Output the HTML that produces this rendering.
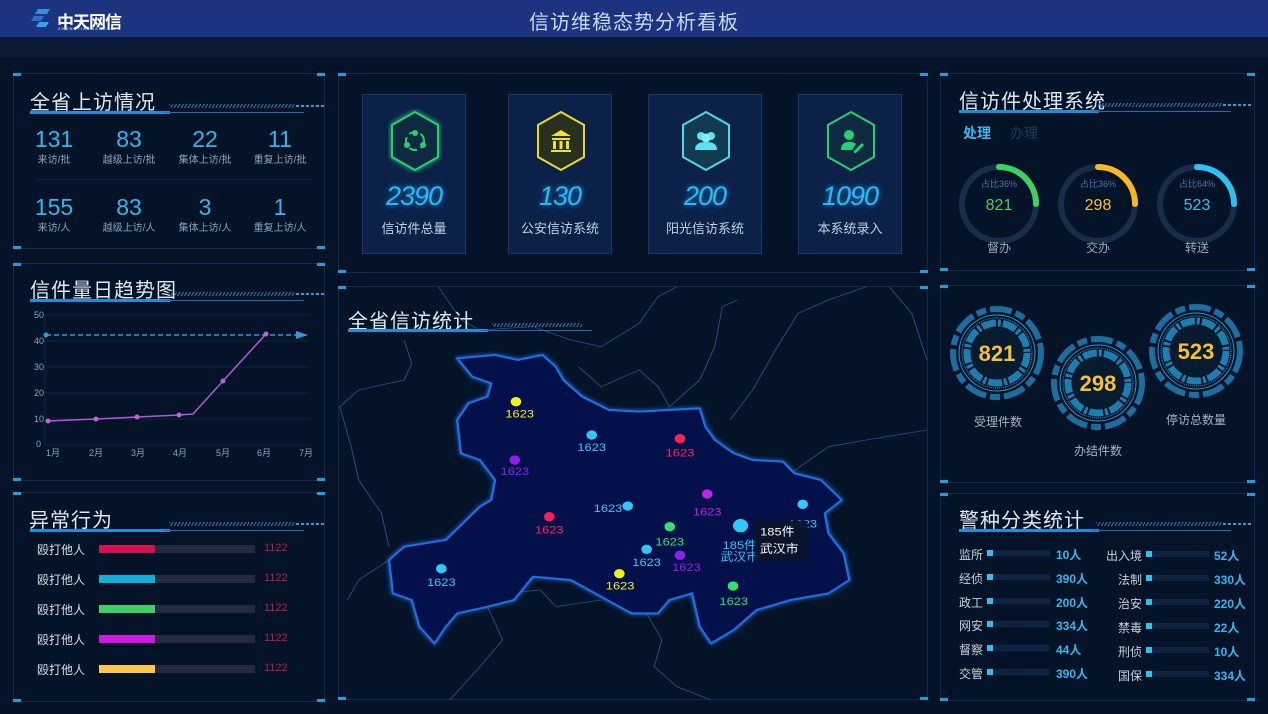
<!DOCTYPE html>
<html><head><meta charset="utf-8">
<style>
*{margin:0;padding:0;box-sizing:border-box}
body{width:1268px;height:714px;background:#041327;font-family:"Liberation Sans","Noto Sans CJK SC",sans-serif;position:relative;overflow:hidden;color:#c9d6e6}
.abs{position:absolute}
.hdr{left:0;top:0;width:1268px;height:37px;background:#1c3480}
.sub{left:0;top:37px;width:1268px;height:20px;background:#0c1a38}
.panel{position:absolute;border:1px solid #0e2a48}
.c{position:absolute;width:8px;height:3px;background:#1aa0e0}
.title{position:absolute;left:16px;top:12px;font-size:20px;color:#dfe8f3;letter-spacing:1px}
.tl{position:absolute;left:16px;top:37px;width:140px;height:3px;background:#1a8fe0}
.tl2{position:absolute;left:150px;top:38px;width:140px;height:1px;background:#1a6fb0}
.hatch{position:absolute;left:155px;top:30px;width:126px;height:4px;background:repeating-linear-gradient(120deg,#2a78b8 0 1px,transparent 1px 3px)}
.dash{position:absolute;left:282px;top:31px;width:30px;height:2px;background:repeating-linear-gradient(90deg,#2a9be0 0 3px,transparent 3px 5px)}
.num{position:absolute;width:80px;text-align:center;font-size:23px;color:#2fb8ee}
.lab{position:absolute;width:80px;text-align:center;font-size:10px;color:#8ea3b8}
.card{position:absolute;top:94px;height:160px;background:#0b2148;border:1px solid #123a6a}
.dig{position:absolute;width:100%;text-align:center;top:86px;font-size:27px;font-style:italic;color:#2fb8ee;letter-spacing:-1px;text-shadow:0 0 6px #1a8fe0}
.cl{position:absolute;width:100%;text-align:center;top:123px;font-size:13px;color:#c3d0de}
.bl{position:absolute;left:37px;font-size:12px;color:#d6dde8}
.bt{position:absolute;left:99px;width:156px;height:8px;background:#252a40}
.bv{position:absolute;left:264px;font-size:11px;color:#c0184e}
.pl{position:absolute;font-size:12px;color:#c7d1de}
.pv{position:absolute;font-size:12px;color:#35b6ee;font-weight:bold}
.sq{position:absolute;width:6px;height:6px;background:#2ec0f0}
.tr{position:absolute;height:6px;background:#0f2440}
</style></head><body>
<div class="abs hdr"></div>
<div class="abs sub"></div>
<svg class="abs" style="left:30px;top:6px" width="24" height="24" viewBox="0 0 24 24"><path d="M8 3h12l-3 5H5z" fill="#3a8ee0"/><path d="M4 10h10l-3 5H1z" fill="#2a6fc8"/><path d="M9 16h10l-3 5H6z" fill="#3a9ef0"/></svg>
<div class="abs" style="left:57px;top:8px;font-size:17px;color:#fff;font-weight:bold;letter-spacing:-1px">中天网信</div>
<div class="abs" style="left:58px;top:26px;font-size:4px;color:#cfe;letter-spacing:1px">ZHONGTIANWANGXIN</div>
<div class="abs" style="left:0;width:1268px;top:6px;text-align:center;font-size:20px;color:#c9d8f2;letter-spacing:1px">信访维稳态势分析看板</div>

<!-- left panel 1 -->
<div class="panel" style="left:13px;top:73px;width:312px;height:176px">
<div class="c" style="left:-1px;top:-1px"></div><div class="c" style="right:-1px;top:-1px"></div><div class="c" style="left:-1px;bottom:-1px"></div><div class="c" style="right:-1px;bottom:-1px"></div>
<div class="title">全省上访情况</div><div class="tl"></div><div class="tl2"></div><div class="hatch"></div><div class="dash"></div>
<div class="num" style="left:0;top:52px">131</div><div class="lab" style="left:0;top:77px">来访/批</div>
<div class="num" style="left:75px;top:52px">83</div><div class="lab" style="left:75px;top:77px">越级上访/批</div>
<div class="num" style="left:151px;top:52px">22</div><div class="lab" style="left:151px;top:77px">集体上访/批</div>
<div class="num" style="left:226px;top:52px">11</div><div class="lab" style="left:226px;top:77px">重复上访/批</div>
<div class="abs" style="left:23px;top:105px;width:275px;height:1px;background:#0f2540"></div>
<div class="num" style="left:0;top:120px">155</div><div class="lab" style="left:0;top:145px">来访/人</div>
<div class="num" style="left:75px;top:120px">83</div><div class="lab" style="left:75px;top:145px">越级上访/人</div>
<div class="num" style="left:151px;top:120px">3</div><div class="lab" style="left:151px;top:145px">集体上访/人</div>
<div class="num" style="left:226px;top:120px">1</div><div class="lab" style="left:226px;top:145px">重复上访/人</div>
</div>

<!-- left panel 2 chart -->
<div class="panel" style="left:13px;top:263px;width:312px;height:218px">
<div class="c" style="left:-1px;top:-1px"></div><div class="c" style="right:-1px;top:-1px"></div><div class="c" style="left:-1px;bottom:-1px"></div><div class="c" style="right:-1px;bottom:-1px"></div>
<div class="title" style="top:10px">信件量日趋势图</div><div class="tl" style="top:35px"></div><div class="tl2" style="top:36px"></div><div class="hatch" style="top:28px"></div><div class="dash" style="top:29px"></div>
</div>
<svg class="abs" style="left:0;top:300px" width="330" height="170">
<g stroke="#0f2442" stroke-width="1">
<line x1="45" y1="15" x2="310" y2="15"/><line x1="45" y1="41" x2="310" y2="41"/><line x1="45" y1="67" x2="310" y2="67"/><line x1="45" y1="93" x2="310" y2="93"/><line x1="45" y1="119" x2="310" y2="119"/><line x1="45" y1="145" x2="310" y2="145"/><line x1="45" y1="15" x2="45" y2="145"/></g>
<g font-size="9" fill="#8ea3b8" font-family="Liberation Sans,Noto Sans CJK SC,sans-serif">
<text x="34" y="18">50</text><text x="34" y="44">40</text><text x="34" y="70">30</text><text x="34" y="96">20</text><text x="34" y="122">10</text><text x="36" y="147">0</text>
<text x="46" y="156">1月</text><text x="89" y="156">2月</text><text x="131" y="156">3月</text><text x="173" y="156">4月</text><text x="216" y="156">5月</text><text x="257" y="156">6月</text><text x="299" y="156">7月</text></g>
<line x1="46" y1="35" x2="298" y2="35" stroke="#2a9be0" stroke-width="1.5" stroke-dasharray="5 3"/>
<circle cx="46" cy="35" r="2.5" fill="#2a9be0"/><path d="M296 31l12 4-12 4z" fill="#2a9be0"/>
<polyline points="48,121 96,119 137,117 179,115 193,114 223,81 266,34" fill="none" stroke="#b05ad8" stroke-width="1.5"/>
<g fill="#c060e0"><circle cx="48" cy="121" r="2.5"/><circle cx="96" cy="119" r="2.5"/><circle cx="137" cy="117" r="2.5"/><circle cx="179" cy="115" r="2.5"/><circle cx="223" cy="81" r="2.5"/><circle cx="266" cy="34" r="2.5"/></g>
</svg>

<!-- left panel 3 bars -->
<div class="panel" style="left:13px;top:492px;width:312px;height:210px">
<div class="c" style="left:-1px;top:-1px"></div><div class="c" style="right:-1px;top:-1px"></div><div class="c" style="left:-1px;bottom:-1px"></div><div class="c" style="right:-1px;bottom:-1px"></div>
<div class="title" style="left:15px;top:11px">异常行为</div><div class="tl" style="top:36px"></div><div class="tl2" style="top:37px"></div><div class="hatch" style="top:29px"></div><div class="dash" style="top:30px"></div>
</div>
<div class="bl" style="top:541px">殴打他人</div><div class="bt" style="top:545px"><div style="width:56px;height:8px;background:#d8104e"></div></div><div class="bv" style="top:542px">1122</div>
<div class="bl" style="top:571px">殴打他人</div><div class="bt" style="top:575px"><div style="width:56px;height:8px;background:#0cb0d8"></div></div><div class="bv" style="top:572px">1122</div>
<div class="bl" style="top:601px">殴打他人</div><div class="bt" style="top:605px"><div style="width:56px;height:8px;background:#3ed068"></div></div><div class="bv" style="top:602px">1122</div>
<div class="bl" style="top:631px">殴打他人</div><div class="bt" style="top:635px"><div style="width:56px;height:8px;background:#d018e0"></div></div><div class="bv" style="top:632px">1122</div>
<div class="bl" style="top:661px">殴打他人</div><div class="bt" style="top:665px"><div style="width:56px;height:8px;background:#ffc848"></div></div><div class="bv" style="top:662px">1122</div>

<!-- middle top -->
<div class="panel" style="left:338px;top:73px;width:590px;height:200px">
<div class="c" style="left:-1px;top:-1px"></div><div class="c" style="right:-1px;top:-1px"></div><div class="c" style="left:-1px;bottom:-1px"></div><div class="c" style="right:-1px;bottom:-1px"></div>
</div>
<div class="card" style="left:362px;width:104px">
<svg class="abs" style="left:25px;top:14px" width="54" height="64" viewBox="0 0 54 64"><path d="M27 3L50 16V48L27 61L4 48V16Z" fill="#0d2a40" stroke="#25d070" stroke-width="2" style="filter:drop-shadow(0 0 3px #25d070)"/><circle cx="27" cy="24" r="3" fill="#25d070"/><circle cx="19" cy="36" r="3" fill="#25d070"/><circle cx="35" cy="36" r="3" fill="#25d070"/><circle cx="27" cy="32" r="9" fill="none" stroke="#25d070" stroke-width="2" stroke-dasharray="8 4"/></svg>
<div class="dig">2390</div><div class="cl">信访件总量</div></div>
<div class="card" style="left:508px;width:104px">
<svg class="abs" style="left:25px;top:14px" width="54" height="64" viewBox="0 0 54 64"><path d="M27 3L50 16V48L27 61L4 48V16Z" fill="#2a3020" stroke="#e8d830" stroke-width="2"/><path d="M17 27L27 21L37 27Z M18 29h18v2H18z M19 32h3v8h-3z M25.5 32h3v8h-3z M32 32h3v8h-3z M17 41h20v2H17z" fill="#f0e030"/></svg>
<div class="dig">130</div><div class="cl">公安信访系统</div></div>
<div class="card" style="left:648px;width:114px">
<svg class="abs" style="left:30px;top:14px" width="54" height="64" viewBox="0 0 54 64"><path d="M27 3L50 16V48L27 61L4 48V16Z" fill="#123a50" stroke="#50d8e8" stroke-width="2"/><circle cx="22" cy="27" r="4" fill="#60e0f0"/><circle cx="32" cy="27" r="4" fill="#60e0f0"/><circle cx="27" cy="29" r="4.5" fill="#80f0ff"/><path d="M16 41c0-6 4-8 11-8s11 2 11 8z" fill="#60e0f0"/></svg>
<div class="dig">200</div><div class="cl">阳光信访系统</div></div>
<div class="card" style="left:798px;width:104px">
<svg class="abs" style="left:25px;top:14px" width="54" height="64" viewBox="0 0 54 64"><path d="M27 3L50 16V48L27 61L4 48V16Z" fill="#0d2a40" stroke="#25d070" stroke-width="2"/><circle cx="25" cy="26" r="5" fill="#25d070"/><path d="M17 41c0-6 3-8 8-8s6 1 7 2l-4 6z" fill="#25d070"/><path d="M30 42l8-8 2 2-8 8h-2z" fill="#25d070"/></svg>
<div class="dig">1090</div><div class="cl">本系统录入</div></div>

<!-- map -->
<div class="panel" style="left:338px;top:286px;width:590px;height:414px">
<div class="c" style="left:-1px;top:-1px"></div><div class="c" style="right:-1px;top:-1px"></div><div class="c" style="left:-1px;bottom:-1px"></div><div class="c" style="right:-1px;bottom:-1px"></div>
</div>
<svg class="abs" style="left:336px;top:280px" width="594" height="434" viewBox="0 0 1568 1302" preserveAspectRatio="none">
<g fill="none" stroke="#2a4e80" stroke-width="2.5">
<path d="M270 20 L330 120 L380 150 L520 140 L620 180 L700 200 L800 130 L850 50 L900 20"/>
<path d="M180 180 L200 250 L180 300 L60 330 L10 380 L40 500 L60 600 L120 700 L140 800"/>
<path d="M640 260 L700 320 L800 270 L850 320 L880 380"/>
<path d="M880 380 L960 300 L1000 200 L1020 80 L1060 60"/>
<path d="M1040 420 L1100 330 L1160 210 L1220 100 L1300 60 L1400 20"/>
<path d="M1200 580 L1300 500 L1400 480 L1560 450"/>
<path d="M1460 20 L1520 100 L1560 240"/>
<path d="M400 980 L440 1080 L380 1160 L300 1260"/>
<path d="M820 1000 L860 1080 L840 1160 L900 1220 L990 1260"/>
<path d="M450 940 L540 930 L580 980 L700 960"/>
<path d="M140 840 L60 900 L30 960"/>
</g>
<path d="M320 235 L420 225 L480 240 L545 225 L580 260 L600 300 L650 350 L720 390 L800 395 L880 390 L960 385 L975 440 L1000 480 L1050 520 L1100 540 L1180 545 L1210 580 L1280 600 L1335 660 L1290 700 L1300 760 L1340 820 L1355 900 L1300 940 L1200 960 L1110 990 L1050 1050 L990 1090 L960 1040 L940 940 L880 960 L850 1000 L780 1000 L700 950 L620 900 L520 890 L470 960 L400 980 L320 1000 L290 1040 L260 1090 L220 1040 L200 960 L150 940 L140 840 L180 800 L290 780 L380 680 L410 660 L420 600 L380 540 L330 520 L320 420 L350 370 L400 350 L410 310 L360 290 Z" fill="#03104a" stroke="#1f6fe0" stroke-width="6" style="filter:drop-shadow(0 0 6px #1f6fe0)"/>
<g font-size="34" font-family="Liberation Sans,sans-serif" text-anchor="middle">
<circle cx="475" cy="365" r="14" fill="#f0f020"/><text x="485" y="412" fill="#f0f020">1623</text>
<circle cx="675" cy="465" r="14" fill="#30c8f8"/><text x="675" y="513" fill="#30c8f8">1623</text>
<circle cx="908" cy="476" r="14" fill="#ff1f58"/><text x="908" y="529" fill="#ff1f58">1623</text>
<circle cx="472" cy="540" r="14" fill="#9020f0"/><text x="472" y="585" fill="#9020f0">1623</text>
<circle cx="980" cy="642" r="14" fill="#c020f0"/><text x="980" y="707" fill="#c020f0">1623</text>
<circle cx="770" cy="678" r="14" fill="#30c8f8"/><text x="718" y="696" fill="#30c8f8">1623</text>
<circle cx="563" cy="710" r="14" fill="#ff1f58"/><text x="563" y="760" fill="#ff1f58">1623</text>
<circle cx="881" cy="740" r="14" fill="#30e070"/><text x="881" y="796" fill="#30e070">1623</text>
<circle cx="820" cy="808" r="14" fill="#30c8f8"/><text x="820" y="858" fill="#30c8f8">1623</text>
<circle cx="908" cy="826" r="14" fill="#9020f0"/><text x="925" y="873" fill="#9020f0">1623</text>
<circle cx="278" cy="866" r="14" fill="#30c8f8"/><text x="278" y="918" fill="#30c8f8">1623</text>
<circle cx="748" cy="881" r="14" fill="#f0f020"/><text x="750" y="929" fill="#f0f020">1623</text>
<circle cx="1048" cy="918" r="14" fill="#30e070"/><text x="1050" y="975" fill="#30e070">1623</text>
<circle cx="1232" cy="673" r="14" fill="#30c8f8"/><text x="1232" y="743" fill="#30c8f8">1623</text>
<circle cx="1068" cy="737" r="20" fill="#30c8f8"/><text x="1066" y="807" fill="#30c8f8">185件</text><text x="1066" y="842" fill="#30c8f8">武汉市</text>
<rect x="1105" y="722" width="140" height="120" fill="#0a1428" opacity="0.9"/>
<text x="1165" y="767" fill="#fff">185件</text><text x="1170" y="817" fill="#fff">武汉市</text>
</g>
</svg>
<div class="abs" style="left:348px;top:305px;font-size:20px;color:#dfe8f3;letter-spacing:1px">全省信访统计</div>
<div class="abs" style="left:348px;top:329px;width:140px;height:3px;background:#1a8fe0"></div>
<div class="abs" style="left:482px;top:330px;width:110px;height:1px;background:#1a6fb0"></div>
<div class="abs" style="left:492px;top:323px;width:90px;height:4px;background:repeating-linear-gradient(120deg,#2a78b8 0 1px,transparent 1px 3px)"></div>

<!-- right panel 1 -->
<div class="panel" style="left:940px;top:73px;width:315px;height:198px">
<div class="c" style="left:-1px;top:-1px"></div><div class="c" style="right:-1px;top:-1px"></div><div class="c" style="left:-1px;bottom:-1px"></div><div class="c" style="right:-1px;bottom:-1px"></div>
<div class="title" style="left:18px;top:11px">信访件处理系统</div><div class="tl" style="left:18px;top:36px"></div><div class="tl2" style="top:37px"></div><div class="hatch" style="top:29px"></div><div class="dash" style="top:30px"></div>
<div class="abs" style="left:22px;top:49px;font-size:14px;color:#3ab8ee;font-weight:bold">处理</div>
<div class="abs" style="left:69px;top:49px;font-size:14px;color:#24384e">办理</div>
</div>
<svg class="abs" style="left:940px;top:140px" width="315" height="125">
<g fill="none" stroke-width="6">
<circle cx="59" cy="64" r="37" stroke="#1a2d48"/><path d="M59 27 A37 37 0 0 1 96 64" stroke="#3ed060" stroke-linecap="round"/>
<circle cx="158" cy="64" r="37" stroke="#1a2d48"/><path d="M158 27 A37 37 0 0 1 195 64" stroke="#f8b820" stroke-linecap="round"/>
<circle cx="257" cy="64" r="37" stroke="#1a2d48"/><path d="M257 27 A37 37 0 0 1 294 64" stroke="#2ec0f0" stroke-linecap="round"/>
</g>
<g text-anchor="middle" font-family="Liberation Sans,Noto Sans CJK SC,sans-serif">
<g font-size="9" fill="#3a7aa8"><text x="59" y="47">占比36%</text><text x="158" y="47">占比36%</text><text x="257" y="47">占比64%</text></g>
<g font-size="16"><text x="59" y="70" fill="#3ed060">821</text><text x="158" y="70" fill="#f8c030">298</text><text x="257" y="70" fill="#2ec0f0">523</text></g>
<g font-size="12" fill="#9aa8b8"><text x="59" y="112">督办</text><text x="158" y="112">交办</text><text x="257" y="112">转送</text></g>
</g>
</svg>

<!-- right panel 2 -->
<div class="panel" style="left:940px;top:285px;width:315px;height:198px">
<div class="c" style="left:-1px;top:-1px"></div><div class="c" style="right:-1px;top:-1px"></div><div class="c" style="left:-1px;bottom:-1px"></div><div class="c" style="right:-1px;bottom:-1px"></div>
</div>
<svg class="abs" style="left:940px;top:285px" width="315" height="198">
<defs><g id="g">
<circle r="44" fill="none" stroke="#1a6fa0" stroke-width="6" stroke-dasharray="22 4 10 4"/>
<circle r="38" fill="none" stroke="#2a9bd0" stroke-width="1"/>
<circle r="35" fill="none" stroke="#2a9bd0" stroke-width="1" stroke-dasharray="1 1"/>
<circle r="30" fill="none" stroke="#1d7fb0" stroke-width="7" stroke-dasharray="14 2 3 2"/>
<circle r="26" fill="#061a30"/>
</g></defs>
<use href="#g" x="57" y="68"/><use href="#g" x="158" y="98"/><use href="#g" x="256" y="66"/>
<g text-anchor="middle" font-family="Liberation Sans,Noto Sans CJK SC,sans-serif">
<g font-size="22" font-weight="bold" fill="#f8c030"><text x="57" y="76">821</text><text x="158" y="106">298</text><text x="256" y="74">523</text></g>
<g font-size="12" fill="#a8b4c4"><text x="58" y="141">受理件数</text><text x="158" y="170">办结件数</text><text x="256" y="139">停访总数量</text></g>
</g>
</svg>

<!-- right panel 3 -->
<div class="panel" style="left:940px;top:493px;width:315px;height:208px">
<div class="c" style="left:-1px;top:-1px"></div><div class="c" style="right:-1px;top:-1px"></div><div class="c" style="left:-1px;bottom:-1px"></div><div class="c" style="right:-1px;bottom:-1px"></div>
<div class="title" style="left:18px;top:10px">警种分类统计</div><div class="tl" style="left:18px;top:35px"></div><div class="tl2" style="top:36px"></div><div class="hatch" style="top:28px"></div><div class="dash" style="top:29px"></div>
</div>
<div class="pl" style="left:959px;top:546px">监所</div><div class="sq" style="left:987px;top:550px"></div><div class="tr" style="left:993px;top:550px;width:57px"></div><div class="pv" style="left:1056px;top:546px">10人</div>
<div class="pl" style="left:959px;top:570px">经侦</div><div class="sq" style="left:987px;top:574px"></div><div class="tr" style="left:993px;top:574px;width:57px"></div><div class="pv" style="left:1056px;top:570px">390人</div>
<div class="pl" style="left:959px;top:594px">政工</div><div class="sq" style="left:987px;top:598px"></div><div class="tr" style="left:993px;top:598px;width:57px"></div><div class="pv" style="left:1056px;top:594px">200人</div>
<div class="pl" style="left:959px;top:617px">网安</div><div class="sq" style="left:987px;top:621px"></div><div class="tr" style="left:993px;top:621px;width:57px"></div><div class="pv" style="left:1056px;top:617px">334人</div>
<div class="pl" style="left:959px;top:641px">督察</div><div class="sq" style="left:987px;top:645px"></div><div class="tr" style="left:993px;top:645px;width:57px"></div><div class="pv" style="left:1056px;top:641px">44人</div>
<div class="pl" style="left:959px;top:665px">交管</div><div class="sq" style="left:987px;top:669px"></div><div class="tr" style="left:993px;top:669px;width:57px"></div><div class="pv" style="left:1056px;top:665px">390人</div>

<div class="pl" style="left:1106px;top:547px">出入境</div><div class="sq" style="left:1146px;top:551px"></div><div class="tr" style="left:1152px;top:551px;width:57px"></div><div class="pv" style="left:1214px;top:547px">52人</div>
<div class="pl" style="left:1118px;top:571px">法制</div><div class="sq" style="left:1146px;top:575px"></div><div class="tr" style="left:1152px;top:575px;width:57px"></div><div class="pv" style="left:1214px;top:571px">330人</div>
<div class="pl" style="left:1118px;top:595px">治安</div><div class="sq" style="left:1146px;top:599px"></div><div class="tr" style="left:1152px;top:599px;width:57px"></div><div class="pv" style="left:1214px;top:595px">220人</div>
<div class="pl" style="left:1118px;top:619px">禁毒</div><div class="sq" style="left:1146px;top:623px"></div><div class="tr" style="left:1152px;top:623px;width:57px"></div><div class="pv" style="left:1214px;top:619px">22人</div>
<div class="pl" style="left:1118px;top:643px">刑侦</div><div class="sq" style="left:1146px;top:647px"></div><div class="tr" style="left:1152px;top:647px;width:57px"></div><div class="pv" style="left:1214px;top:643px">10人</div>
<div class="pl" style="left:1118px;top:667px">国保</div><div class="sq" style="left:1146px;top:671px"></div><div class="tr" style="left:1152px;top:671px;width:57px"></div><div class="pv" style="left:1214px;top:667px">334人</div>
</body></html>
